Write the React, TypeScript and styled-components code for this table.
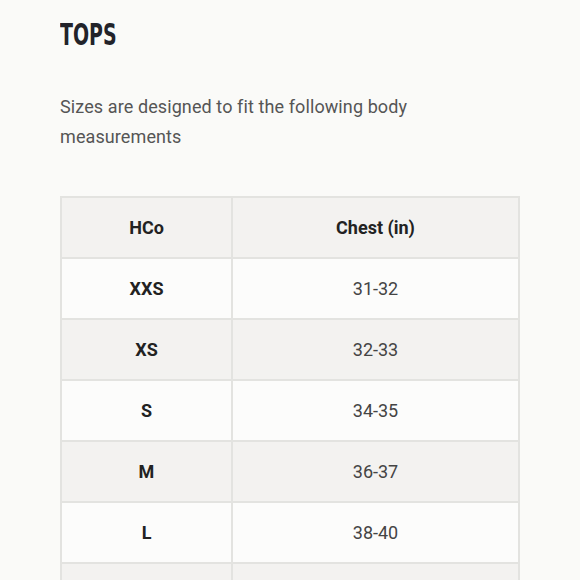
import React from 'react';
import styled, { createGlobalStyle } from 'styled-components';

const GlobalStyle = createGlobalStyle`
  html, body {
    margin: 0;
    padding: 0;
    background: #fafaf8;
  }
  body {
    font-family: Roboto, 'Noto Sans', sans-serif;
  }
`;

interface SizeRow {
  size: string;
  chest: string;
}

const rows: SizeRow[] = [
  { size: 'XXS', chest: '31-32' },
  { size: 'XS', chest: '32-33' },
  { size: 'S', chest: '34-35' },
  { size: 'M', chest: '36-37' },
  { size: 'L', chest: '38-40' },
  { size: 'XL', chest: '41-44' },
];

const App = () => {
  return (
    <>
      <GlobalStyle />
      <Page>
        <Title>TOPS</Title>
        <Intro>Sizes are designed to fit the following body measurements</Intro>
        <SizeTable>
          <thead>
            <tr>
              <HeadCell>HCo</HeadCell>
              <HeadCell>Chest (in)</HeadCell>
            </tr>
          </thead>
          <tbody>
            {rows.map((row, i) => (
              <BodyRow key={row.size} shaded={i % 2 === 1}>
                <SizeCell>{row.size}</SizeCell>
                <ValueCell>{row.chest}</ValueCell>
              </BodyRow>
            ))}
          </tbody>
        </SizeTable>
      </Page>
    </>
  );
};

export default App;

const Page = styled.div`
  padding: 16px 60px 0 60px;
  width: 460px;
  height: 580px;
  overflow: hidden;
`;

const Title = styled.h2`
  margin: 0;
  font-family: 'DejaVu Sans Condensed', 'DejaVu Sans', sans-serif;
  font-weight: 700;
  font-size: 31px;
  line-height: 36px;
  color: #22232a;
  transform: scaleX(0.68);
  transform-origin: left center;
`;

const Intro = styled.p`
  margin: 40px 0 0 0;
  font-size: 18px;
  line-height: 30px;
  letter-spacing: 0.1px;
  color: #555;
  width: 380px;
`;

const SizeTable = styled.table`
  margin-top: 44px;
  width: 460px;
  border-collapse: collapse;
  table-layout: fixed;

  td, th {
    border: 2px solid #e3e3e0;
    height: 61px;
    padding: 0;
    text-align: center;
    vertical-align: middle;
    box-sizing: border-box;
  }

  th:first-child, td:first-child {
    width: 171px;
  }
`;

const HeadCell = styled.th`
  background: #f3f2f0;
  font-size: 18px;
  font-weight: 700;
  color: #222;
`;

const BodyRow = styled.tr<{ shaded: boolean }>`
  background: ${(p) => (p.shaded ? '#f3f2f0' : '#fcfcfb')};
`;

const SizeCell = styled.td`
  font-size: 18px;
  font-weight: 700;
  color: #222;
`;

const ValueCell = styled.td`
  font-size: 18px;
  font-weight: 400;
  color: #444;
`;
